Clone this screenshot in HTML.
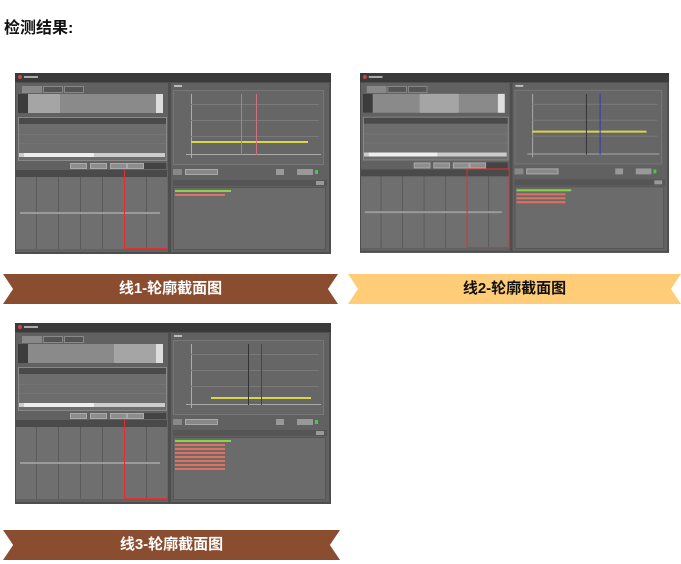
<!DOCTYPE html>
<html><head><meta charset="utf-8"><style>
*{margin:0;padding:0;box-sizing:border-box}
body{width:681px;height:564px;background:#fff;position:relative;overflow:hidden;font-family:"Liberation Sans","Noto Sans CJK SC",sans-serif}
.h{position:absolute;left:4px;top:14px;font-size:16px;font-weight:bold;color:#111}
.w{position:absolute;width:316px;height:181px;background:#4e4e4e;transform-origin:0 0;font-size:3px;color:#ddd;overflow:hidden}
.w div{position:absolute}
.ttl{left:0;top:0;width:316px;height:9px;background:#3a3a3a}
.lp{left:1px;top:10px;width:152px;height:169px;background:#616161}
.rp{left:156px;top:10px;width:158px;height:169px;background:#616161}
.tab{top:3px;height:7px;width:20px;background:#777;border:1px solid #888}
.info{left:2px;top:11px;width:145px;height:19px;background:#8a8a8a}
.th{height:6px;background:#4a4a4a}
.row{height:1px;background:#747474}
.cell{background:#6a6a6a}
.btn{top:80px;height:6px;width:17px;background:#8d8d8d;border:1px solid #aaa}
.chart{left:2px;top:7px;width:151px;height:75px;background:#666;border:1px solid #777}
.ax{background:#aaa}
.grid{background:#7a7a7a}
.yl{height:2px;background:#d9d64a}
.log{left:2px;top:104px;width:153px;height:63px;background:#6b6b6b;border:1px solid #555}
.red{border:1px solid #e03030}
.bn{position:absolute;height:30px;font-weight:bold;font-size:15px;text-align:center;line-height:30px}
</style></head><body>
<div class="h">检测结果:</div>

<div class="w" style="left:15px;top:73px">
<div class="ttl"></div><div style="left:3px;top:2px;width:4px;height:4px;background:#c44;border-radius:50%"></div><div style="left:9px;top:3px;width:14px;height:2px;background:#aaa"></div>
<div class="lp">
 <div class="tab" style="left:6px;background:#888"></div><div class="tab" style="left:27px;background:#555"></div><div class="tab" style="left:48px;background:#555"></div>
 <div class="info"><div style="left:0;top:0;width:10px;height:19px;background:#3c3c3c"></div><div style="left:10px;top:0;width:32px;height:19px;background:#a5a5a5"></div><div style="left:138px;top:0;width:7px;height:19px;background:#ddd"></div></div>
 <div style="left:2px;top:34px;width:149px;height:44px;background:#6d6d6d;border:1px solid #888"></div>
 <div class="th" style="left:3px;top:35px;width:147px"></div>
 <div class="row" style="left:3px;top:51px;width:147px"></div><div class="row" style="left:3px;top:60px;width:147px"></div>
 <div style="left:3px;top:70px;width:146px;height:4px;background:#ccc"></div><div style="left:8px;top:70px;width:70px;height:4px;background:#eee"></div>
 <div class="btn" style="left:54px"></div><div class="btn" style="left:74px"></div><div class="btn" style="left:94px"></div><div class="btn" style="left:111px"></div><div style="left:128px;top:80px;width:22px;height:6px;background:#444"></div>
 <div class="th" style="left:0;top:87px;width:152px;height:7px"></div>
 <div class="cell" style="left:0;top:94px;width:152px;height:72px;background:#6f6f6f"></div>
 <div style="left:20px;top:94px;width:1px;height:72px;background:#5a5a5a"></div><div style="left:42px;top:94px;width:1px;height:72px;background:#5a5a5a"></div><div style="left:64px;top:94px;width:1px;height:72px;background:#5a5a5a"></div><div style="left:86px;top:94px;width:1px;height:72px;background:#5a5a5a"></div><div style="left:130px;top:94px;width:1px;height:72px;background:#5a5a5a"></div>
 <div style="left:4px;top:129px;width:140px;height:2px;background:#9a9a9a"></div>
 <div class="red" style="left:108px;top:86px;width:44px;height:80px"></div>
</div>
<div class="rp">
 <div style="left:3px;top:2px;width:8px;height:2px;background:#bbb"></div>
 <div class="chart"><div class="ax" style="left:17px;top:3px;width:1px;height:64px"></div><div class="ax" style="left:12px;top:63px;width:135px;height:1px"></div>
 <div class="grid" style="left:17px;top:13px;width:128px;height:1px"></div><div class="grid" style="left:17px;top:29px;width:128px;height:1px"></div><div class="grid" style="left:17px;top:45px;width:128px;height:1px"></div>
 <div class="yl" style="left:17px;top:50px;width:117px"></div>
 <div style="left:67px;top:3px;width:1px;height:61px;background:#d07080"></div><div style="left:82px;top:3px;width:1px;height:61px;background:#d07080"></div></div>
 <div style="left:2px;top:86px;width:9px;height:6px;background:#888"></div><div style="left:14px;top:86px;width:33px;height:6px;background:#888;border:1px solid #aaa"></div>
 <div style="left:105px;top:86px;width:8px;height:6px;background:#999"></div><div style="left:126px;top:86px;width:16px;height:6px;background:#999"></div><div style="left:144px;top:87px;width:3px;height:4px;background:#4c4"></div>
 <div style="left:2px;top:97px;width:154px;height:6px;background:#555"></div><div style="left:145px;top:98px;width:8px;height:4px;background:#999"></div>
 <div class="log"><div style="left:1px;top:2px;width:56px;height:2px;background:#8cd34a"></div><div style="left:1px;top:6px;width:50px;height:2px;background:#e07060"></div></div>
</div>
</div>

<div class="w" style="left:360px;top:73px;transform:scale(0.978,0.994)">
<div class="ttl"></div><div style="left:3px;top:2px;width:4px;height:4px;background:#c44;border-radius:50%"></div><div style="left:9px;top:3px;width:14px;height:2px;background:#aaa"></div>
<div class="lp">
 <div class="tab" style="left:6px;background:#888"></div><div class="tab" style="left:27px;background:#555"></div><div class="tab" style="left:48px;background:#555"></div>
 <div class="info"><div style="left:0;top:0;width:10px;height:19px;background:#3c3c3c"></div><div style="left:58px;top:0;width:40px;height:19px;background:#a5a5a5"></div><div style="left:138px;top:0;width:7px;height:19px;background:#ddd"></div></div>
 <div style="left:2px;top:34px;width:149px;height:44px;background:#6d6d6d;border:1px solid #888"></div>
 <div class="th" style="left:3px;top:35px;width:147px"></div>
 <div class="row" style="left:3px;top:51px;width:147px"></div><div class="row" style="left:3px;top:60px;width:147px"></div>
 <div style="left:3px;top:70px;width:146px;height:4px;background:#ccc"></div><div style="left:8px;top:70px;width:70px;height:4px;background:#eee"></div>
 <div class="btn" style="left:54px"></div><div class="btn" style="left:74px"></div><div class="btn" style="left:94px"></div><div class="btn" style="left:111px"></div><div style="left:128px;top:80px;width:22px;height:6px;background:#444"></div>
 <div class="th" style="left:0;top:87px;width:152px;height:7px"></div>
 <div class="cell" style="left:0;top:94px;width:152px;height:72px;background:#6f6f6f"></div>
 <div style="left:20px;top:94px;width:1px;height:72px;background:#5a5a5a"></div><div style="left:42px;top:94px;width:1px;height:72px;background:#5a5a5a"></div><div style="left:64px;top:94px;width:1px;height:72px;background:#5a5a5a"></div><div style="left:86px;top:94px;width:1px;height:72px;background:#5a5a5a"></div><div style="left:130px;top:94px;width:1px;height:72px;background:#5a5a5a"></div>
 <div style="left:4px;top:129px;width:140px;height:2px;background:#9a9a9a"></div>
 <div class="red" style="left:108px;top:86px;width:44px;height:80px"></div>
</div>
<div class="rp">
 <div style="left:3px;top:2px;width:8px;height:2px;background:#bbb"></div>
 <div class="chart"><div class="ax" style="left:17px;top:3px;width:1px;height:64px"></div><div class="ax" style="left:12px;top:63px;width:135px;height:1px"></div>
 <div class="grid" style="left:17px;top:13px;width:128px;height:1px"></div><div class="grid" style="left:17px;top:29px;width:128px;height:1px"></div><div class="grid" style="left:17px;top:45px;width:128px;height:1px"></div>
 <div class="yl" style="left:17px;top:40px;width:117px"></div>
 <div style="left:72px;top:3px;width:1px;height:61px;background:#333"></div><div style="left:86px;top:3px;width:1px;height:61px;background:#3838b0"></div></div>
 <div style="left:2px;top:86px;width:9px;height:6px;background:#888"></div><div style="left:14px;top:86px;width:33px;height:6px;background:#888;border:1px solid #aaa"></div>
 <div style="left:105px;top:86px;width:8px;height:6px;background:#999"></div><div style="left:126px;top:86px;width:16px;height:6px;background:#999"></div><div style="left:144px;top:87px;width:3px;height:4px;background:#4c4"></div>
 <div style="left:2px;top:97px;width:154px;height:6px;background:#555"></div><div style="left:145px;top:98px;width:8px;height:4px;background:#999"></div>
 <div class="log"><div style="left:1px;top:2px;width:56px;height:2px;background:#8cd34a"></div><div style="left:1px;top:6px;width:50px;height:2px;background:#e07060"></div><div style="left:1px;top:10px;width:50px;height:2px;background:#e07060"></div><div style="left:1px;top:14px;width:50px;height:2px;background:#e07060"></div></div>
</div>
</div>

<div class="w" style="left:15px;top:323px">
<div class="ttl"></div><div style="left:3px;top:2px;width:4px;height:4px;background:#c44;border-radius:50%"></div><div style="left:9px;top:3px;width:14px;height:2px;background:#aaa"></div>
<div class="lp">
 <div class="tab" style="left:6px;background:#888"></div><div class="tab" style="left:27px;background:#555"></div><div class="tab" style="left:48px;background:#555"></div>
 <div class="info"><div style="left:0;top:0;width:10px;height:19px;background:#3c3c3c"></div><div style="left:96px;top:0;width:42px;height:19px;background:#a5a5a5"></div><div style="left:138px;top:0;width:7px;height:19px;background:#ddd"></div></div>
 <div style="left:2px;top:34px;width:149px;height:44px;background:#6d6d6d;border:1px solid #888"></div>
 <div class="th" style="left:3px;top:35px;width:147px"></div>
 <div class="row" style="left:3px;top:51px;width:147px"></div><div class="row" style="left:3px;top:60px;width:147px"></div>
 <div style="left:3px;top:70px;width:146px;height:4px;background:#ccc"></div><div style="left:8px;top:70px;width:70px;height:4px;background:#eee"></div>
 <div class="btn" style="left:54px"></div><div class="btn" style="left:74px"></div><div class="btn" style="left:94px"></div><div class="btn" style="left:111px"></div><div style="left:128px;top:80px;width:22px;height:6px;background:#444"></div>
 <div class="th" style="left:0;top:87px;width:152px;height:7px"></div>
 <div class="cell" style="left:0;top:94px;width:152px;height:72px;background:#6f6f6f"></div>
 <div style="left:20px;top:94px;width:1px;height:72px;background:#5a5a5a"></div><div style="left:42px;top:94px;width:1px;height:72px;background:#5a5a5a"></div><div style="left:64px;top:94px;width:1px;height:72px;background:#5a5a5a"></div><div style="left:86px;top:94px;width:1px;height:72px;background:#5a5a5a"></div><div style="left:130px;top:94px;width:1px;height:72px;background:#5a5a5a"></div>
 <div style="left:4px;top:129px;width:140px;height:2px;background:#9a9a9a"></div>
 <div class="red" style="left:108px;top:86px;width:44px;height:80px"></div>
</div>
<div class="rp">
 <div style="left:3px;top:2px;width:8px;height:2px;background:#bbb"></div>
 <div class="chart"><div class="ax" style="left:17px;top:3px;width:1px;height:64px"></div><div class="ax" style="left:12px;top:63px;width:135px;height:1px"></div>
 <div class="grid" style="left:17px;top:13px;width:128px;height:1px"></div><div class="grid" style="left:17px;top:29px;width:128px;height:1px"></div><div class="grid" style="left:17px;top:45px;width:128px;height:1px"></div>
 <div class="yl" style="left:37px;top:56px;width:100px"></div>
 <div style="left:74px;top:3px;width:1px;height:61px;background:#333"></div><div style="left:87px;top:3px;width:1px;height:61px;background:#3838b0"></div></div>
 <div style="left:2px;top:86px;width:9px;height:6px;background:#888"></div><div style="left:14px;top:86px;width:33px;height:6px;background:#888;border:1px solid #aaa"></div>
 <div style="left:105px;top:86px;width:8px;height:6px;background:#999"></div><div style="left:126px;top:86px;width:16px;height:6px;background:#999"></div><div style="left:144px;top:87px;width:3px;height:4px;background:#4c4"></div>
 <div style="left:2px;top:97px;width:154px;height:6px;background:#555"></div><div style="left:145px;top:98px;width:8px;height:4px;background:#999"></div>
 <div class="log"><div style="left:1px;top:2px;width:56px;height:2px;background:#8cd34a"></div><div style="left:1px;top:6px;width:50px;height:2px;background:#e07060"></div><div style="left:1px;top:10px;width:50px;height:2px;background:#e07060"></div><div style="left:1px;top:14px;width:50px;height:2px;background:#e07060"></div><div style="left:1px;top:18px;width:50px;height:2px;background:#e07060"></div><div style="left:1px;top:22px;width:50px;height:2px;background:#e07060"></div><div style="left:1px;top:26px;width:50px;height:2px;background:#e07060"></div><div style="left:1px;top:30px;width:50px;height:2px;background:#e07060"></div></div>
</div>
</div>

<div class="bn" style="left:3px;top:274px;width:335px;background:#8a4d30;color:#fff;clip-path:polygon(0 0,100% 0,97% 50%,100% 100%,0 100%,3% 50%)">线1-轮廓截面图</div>
<div class="bn" style="left:348px;top:274px;width:333px;background:#ffcd78;color:#111;clip-path:polygon(0 0,100% 0,97% 50%,100% 100%,0 100%,3% 50%)">线2-轮廓截面图</div>
<div class="bn" style="left:3px;top:530px;width:337px;background:#8a4d30;color:#fff;clip-path:polygon(0 0,100% 0,97% 50%,100% 100%,0 100%,3% 50%)">线3-轮廓截面图</div>
</body></html>
